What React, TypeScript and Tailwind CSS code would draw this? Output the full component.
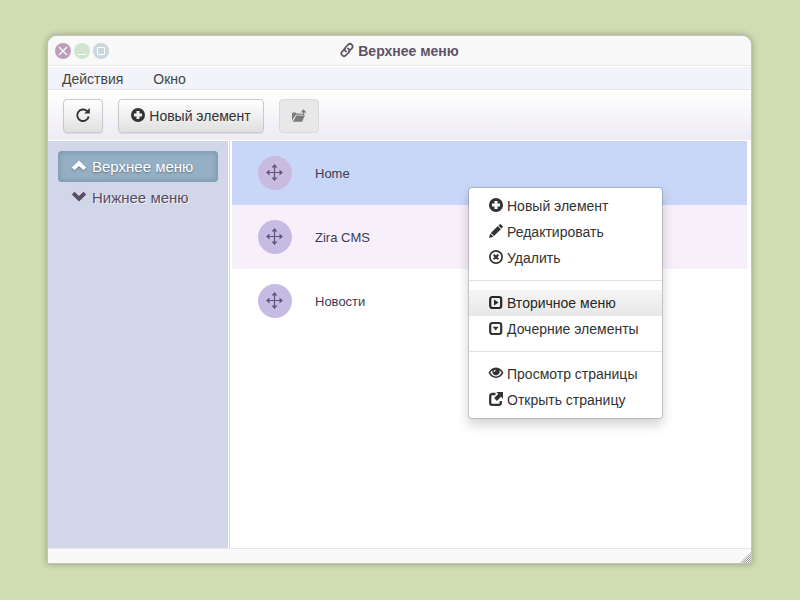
import type { ReactNode } from "react";

type IconName =
  | "plus"
  | "pencil"
  | "remove"
  | "expand"
  | "collapse"
  | "eye"
  | "external"
  | "up"
  | "down"
  | "link"
  | "refresh"
  | "folder"
  | "move";

const shapes: Record<IconName, ReactNode> = {
  plus: (
    <path
      fill="currentColor"
      fillRule="evenodd"
      d="M7 0a7 7 0 1 0 0 14a7 7 0 1 0 0-14zM5.5 3h3v2.5H11v3H8.5V11h-3V8.5H3v-3h2.5z"
    />
  ),
  pencil: (
    <path
      fill="currentColor"
      d="M0 14l1.300-4.500 3.200 3.200zM1.900 8.900l6.900-6.800 3.100 3.100-6.900 6.800zM9.400 1.500l1.200-1.100q.7-.6 1.400 0l1.600 1.600q.6.700 0 1.400l-1.100 1.200z"
    />
  ),
  remove: (
    <g fill="none" stroke="currentColor">
      <circle cx="7" cy="7" r="6.100" strokeWidth="1.700" />
      <path d="M4.700 4.700l4.600 4.600M9.300 4.700L4.700 9.300" strokeWidth="2.100" />
    </g>
  ),
  expand: (
    <g>
      <rect x="1.2" y="2" width="11" height="11" rx="2.200" fill="none" stroke="currentColor" strokeWidth="2.200" />
      <path fill="currentColor" d="M5 4.500l4.500 3L5 10.500z" />
    </g>
  ),
  collapse: (
    <g>
      <rect x="1.2" y="2" width="11" height="11" rx="2.200" fill="none" stroke="currentColor" strokeWidth="2.200" />
      <path fill="currentColor" d="M3.700 5.800h6L6.700 9.500z" />
    </g>
  ),
  eye: (
    <g>
      <path
        fill="currentColor"
        fillRule="evenodd"
        d="M7 1.500C3.500 1.500 1 3.800-.5 6.800C1 9.800 3.500 12 7 12S13 9.800 14.500 6.800C13 3.800 10.500 1.500 7 1.500zM1.300 6.800Q2.300 5.200 3.500 4.300C2.700 7.800 5 9.300 7 9.300S11.300 7.800 10.500 4.300Q11.700 5.200 12.700 6.800Q10.400 10.500 7 10.500T1.300 6.800z"
      />
      <path d="M5 6Q5.200 4.500 6.500 4" fill="none" stroke="#fff" strokeWidth="1.100" />
    </g>
  ),
  external: (
    <g>
      <path
        d="M6.500 2H3.300Q1.200 2 1.200 4.100V10.700Q1.200 12.800 3.300 12.800H9.700Q11.800 12.800 11.800 10.700V9"
        fill="none"
        stroke="currentColor"
        strokeWidth="2.300"
      />
      <path fill="currentColor" d="M7.300 0h6.700v6.700l-2-2L7.900 8.900 5.100 6.100 9.300 2z" />
    </g>
  ),
  up: <path fill="currentColor" d="M7 1.500l7.200 7-2.700 2.800L7 6.900 2.500 11.300-.2 8.500z" />,
  down: <path fill="currentColor" d="M7 11.500L-.2 4.500 2.500 1.700 7 6.100 11.500 1.700 14.200 4.500z" />,
  link: (
    <g fill="none" stroke="currentColor" strokeWidth="1.700" strokeLinecap="round">
      <path d="M8.800 8.400L11.900 5.300a2.500 2.500 0 0 0 0-3.500l-.2-.2a2.500 2.500 0 0 0-3.500 0L5.300 4.500a2.500 2.500 0 0 0 0 3.500l.9.600" />
      <path d="M5.200 5.600L2.100 8.700a2.500 2.500 0 0 0 0 3.500l.2.200a2.500 2.500 0 0 0 3.500 0L8.700 9.500a2.500 2.500 0 0 0 0-3.500l-.9-.6" />
    </g>
  ),
  refresh: (
    <g>
      <path d="M11.200 3.200A5.800 5.800 0 1 0 12.700 8.500" fill="none" stroke="currentColor" strokeWidth="1.900" />
      <path fill="currentColor" d="M13.800 0V5.600H8.200z" />
    </g>
  ),
  folder: (
    <g fill="currentColor">
      <path d="M0 12.300V4.500q0-1 1-1h2.500l1 1h4.500v1.300H4L1 9.800z" />
      <path d="M4.300 6.500H13L10 12.800H0.900z" />
      <path d="M11.500 0.300L14.500 3.500H12.300V6H9.300V4.900H10.900V3.500H8.700z" />
    </g>
  ),
  move: (
    <g>
      <path d="M6.500 0v13M0 6.500h13" stroke="currentColor" strokeWidth="1.200" />
      <path
        fill="currentColor"
        d="M6.500-2L9.500 1.500H3.500zM6.500 15L3.500 11.500H9.500zM-2 6.500L1.500 3.500V9.500zM15 6.500L11.500 9.500V3.500z"
      />
    </g>
  ),
};

function Icon({ name, className = "" }: { name: IconName; className?: string }) {
  return (
    <svg viewBox="0 0 14 14" className={`size-3.5 shrink-0 overflow-visible ${className}`} aria-hidden="true">
      {shapes[name]}
    </svg>
  );
}

const rows = [
  { title: "Home", row: "bg-[#c8d7f8]", dot: "bg-[#c7bbe0]" },
  { title: "Zira CMS", row: "bg-[#f7f0fb]", dot: "bg-[#c6bce3]" },
  { title: "Новости", row: "bg-white", dot: "bg-[#c6bce3]" },
];

const menuGroups: { icon: IconName; label: string; active?: boolean }[][] = [
  [
    { icon: "plus", label: "Новый элемент" },
    { icon: "pencil", label: "Редактировать" },
    { icon: "remove", label: "Удалить" },
  ],
  [
    { icon: "expand", label: "Вторичное меню", active: true },
    { icon: "collapse", label: "Дочерние элементы" },
  ],
  [
    { icon: "eye", label: "Просмотр страницы" },
    { icon: "external", label: "Открыть страницу" },
  ],
];

const toolButton =
  "flex h-[34px] items-center justify-center gap-1 rounded border border-[#c9c9c9] bg-linear-to-b from-white to-[#e0e0e0] px-3 text-[#333] shadow-[0_1px_1px_rgba(0,0,0,0.08)]";

function TitleBar() {
  return (
    <header className="relative flex h-[30px] items-center justify-center border-b border-[#e8e8ea] bg-[#f9f9f9]">
      <div className="absolute left-[7px] top-[7px] flex gap-[3px] text-white">
        <button aria-label="Закрыть" className="size-4 rounded-full bg-[#bd9dba]">
          <svg viewBox="0 0 16 16" className="size-4" fill="none" stroke="currentColor" strokeWidth="1.2">
            <path d="M4 4l8 8M12 4l-8 8" />
          </svg>
        </button>
        <button aria-label="Свернуть" className="size-4 rounded-full bg-[#d0e6d3]">
          <svg viewBox="0 0 16 16" className="size-4" fill="none" stroke="currentColor">
            <path d="M4 11.500h8" />
          </svg>
        </button>
        <button aria-label="Развернуть" className="size-4 rounded-full bg-[#cad8dd]">
          <svg viewBox="0 0 16 16" className="size-4" fill="none" stroke="currentColor">
            <path d="M4.500 4.500h7v7h-7z" />
          </svg>
        </button>
      </div>
      <h1 className="flex items-center gap-1 font-bold text-[#5f5265]">
        <Icon name="link" className="mb-0.5" />
        Верхнее меню
      </h1>
    </header>
  );
}

function ContextMenu() {
  return (
    <div
      role="menu"
      className="absolute left-[420px] top-[151px] w-[195px] rounded border border-black/15 bg-white bg-clip-padding py-[5px] text-[#333] shadow-[0_6px_12px_rgba(0,0,0,0.175)]"
    >
      {menuGroups.map((group, index) => (
        <div key={index} className={index > 0 ? "mt-[9px] border-t border-[#e0e0e0] pt-[9px]" : ""}>
          {group.map((item) => (
            <button
              key={item.label}
              role="menuitem"
              className={`flex h-[26px] w-full items-center gap-1 whitespace-nowrap px-5 ${
                item.active ? "bg-linear-to-b from-[#f5f5f5] to-[#e8e8e8] text-[#262626]" : ""
              }`}
            >
              <Icon name={item.icon} className="mb-0.5" />
              {item.label}
            </button>
          ))}
        </div>
      ))}
    </div>
  );
}

export default function App() {
  return (
    <div className="flex min-h-screen bg-[#d0dcb2] pb-9 pl-[47px] pr-12 pt-[35px] font-['Liberation_Sans',Arial,sans-serif] text-sm">
      <div className="relative flex flex-1 flex-col rounded-t-[10px] border border-[#c4c4c4] bg-white shadow-[0_0_6px_rgba(0,0,0,0.3)]">
        <div className="overflow-hidden rounded-t-[9px]">
          <TitleBar />
          <nav className="flex h-6 items-center gap-[30px] border-b border-t border-b-[#e6e6ec] border-t-white bg-[#f2f4f9] px-3.5 pt-0.5 text-[#444]">
            <button>Действия</button>
            <button>Окно</button>
          </nav>
        </div>
        <div className="flex gap-[15px] border-b border-white bg-linear-to-b from-white to-[#eeebf3] px-[15px] pb-[7px] pt-[9px]">
          <button aria-label="Обновить" className={`${toolButton} w-10`}>
            <Icon name="refresh" className="mb-0.5" />
          </button>
          <button className={`${toolButton} min-w-[146px]`}>
            <Icon name="plus" className="mb-0.5" />
            Новый элемент
          </button>
          <button
            aria-label="Открыть папку"
            disabled
            className="flex h-[34px] w-10 items-center justify-center rounded border border-[#d9d9db] bg-[#e8e8e8] text-[#7c7c7c]"
          >
            <Icon name="folder" />
          </button>
        </div>
        <div className="flex flex-1">
          <aside className="w-[180px] shrink-0 bg-[#d1d6e8] p-2.5 text-[15px]">
            <button className="flex h-[31px] w-full items-center gap-1.5 rounded bg-[#95afc4] px-3.5 text-white shadow-[inset_0_0_6px_rgba(60,90,120,0.4)] text-shadow-[0_1px_2px_rgba(0,0,0,0.4)]">
              <Icon name="up" className="mb-0.5 drop-shadow-[0_1px_1px_rgba(0,0,0,0.3)]" />
              Верхнее меню
            </button>
            <button className="flex h-[31px] w-full items-center gap-1.5 px-3.5 text-[#5a4d62] text-shadow-[1px_1px_0_rgba(255,255,255,0.7)]">
              <Icon name="down" className="mb-0.5" />
              Нижнее меню
            </button>
          </aside>
          <main className="ml-px flex-1 border-l border-[#d1d6e8] pl-0.5 pr-1">
            <ul>
              {rows.map((item) => (
                <li key={item.title} className={`flex h-16 items-center gap-[23px] px-[26px] ${item.row}`}>
                  <span className={`flex size-[34px] items-center justify-center rounded-full text-[#655680] ${item.dot}`}>
                    <Icon name="move" />
                  </span>
                  <span className="pt-0.5 text-[13px] text-[#3d3a55]">{item.title}</span>
                </li>
              ))}
            </ul>
          </main>
        </div>
        <footer className="relative h-[15px] border-t border-[#e6e6e8] bg-[#f9f9f9]">
          <svg viewBox="0 0 11 11" className="absolute bottom-0 right-0 size-[11px]" aria-hidden="true">
            <defs>
              <pattern id="grip" width="2" height="2" patternUnits="userSpaceOnUse">
                <path fill="#999" d="M0 0h1v1H0zM1 1h1v1H1z" />
              </pattern>
            </defs>
            <path fill="url(#grip)" d="M11 0v11H0z" />
          </svg>
        </footer>
        <ContextMenu />
      </div>
    </div>
  );
}
